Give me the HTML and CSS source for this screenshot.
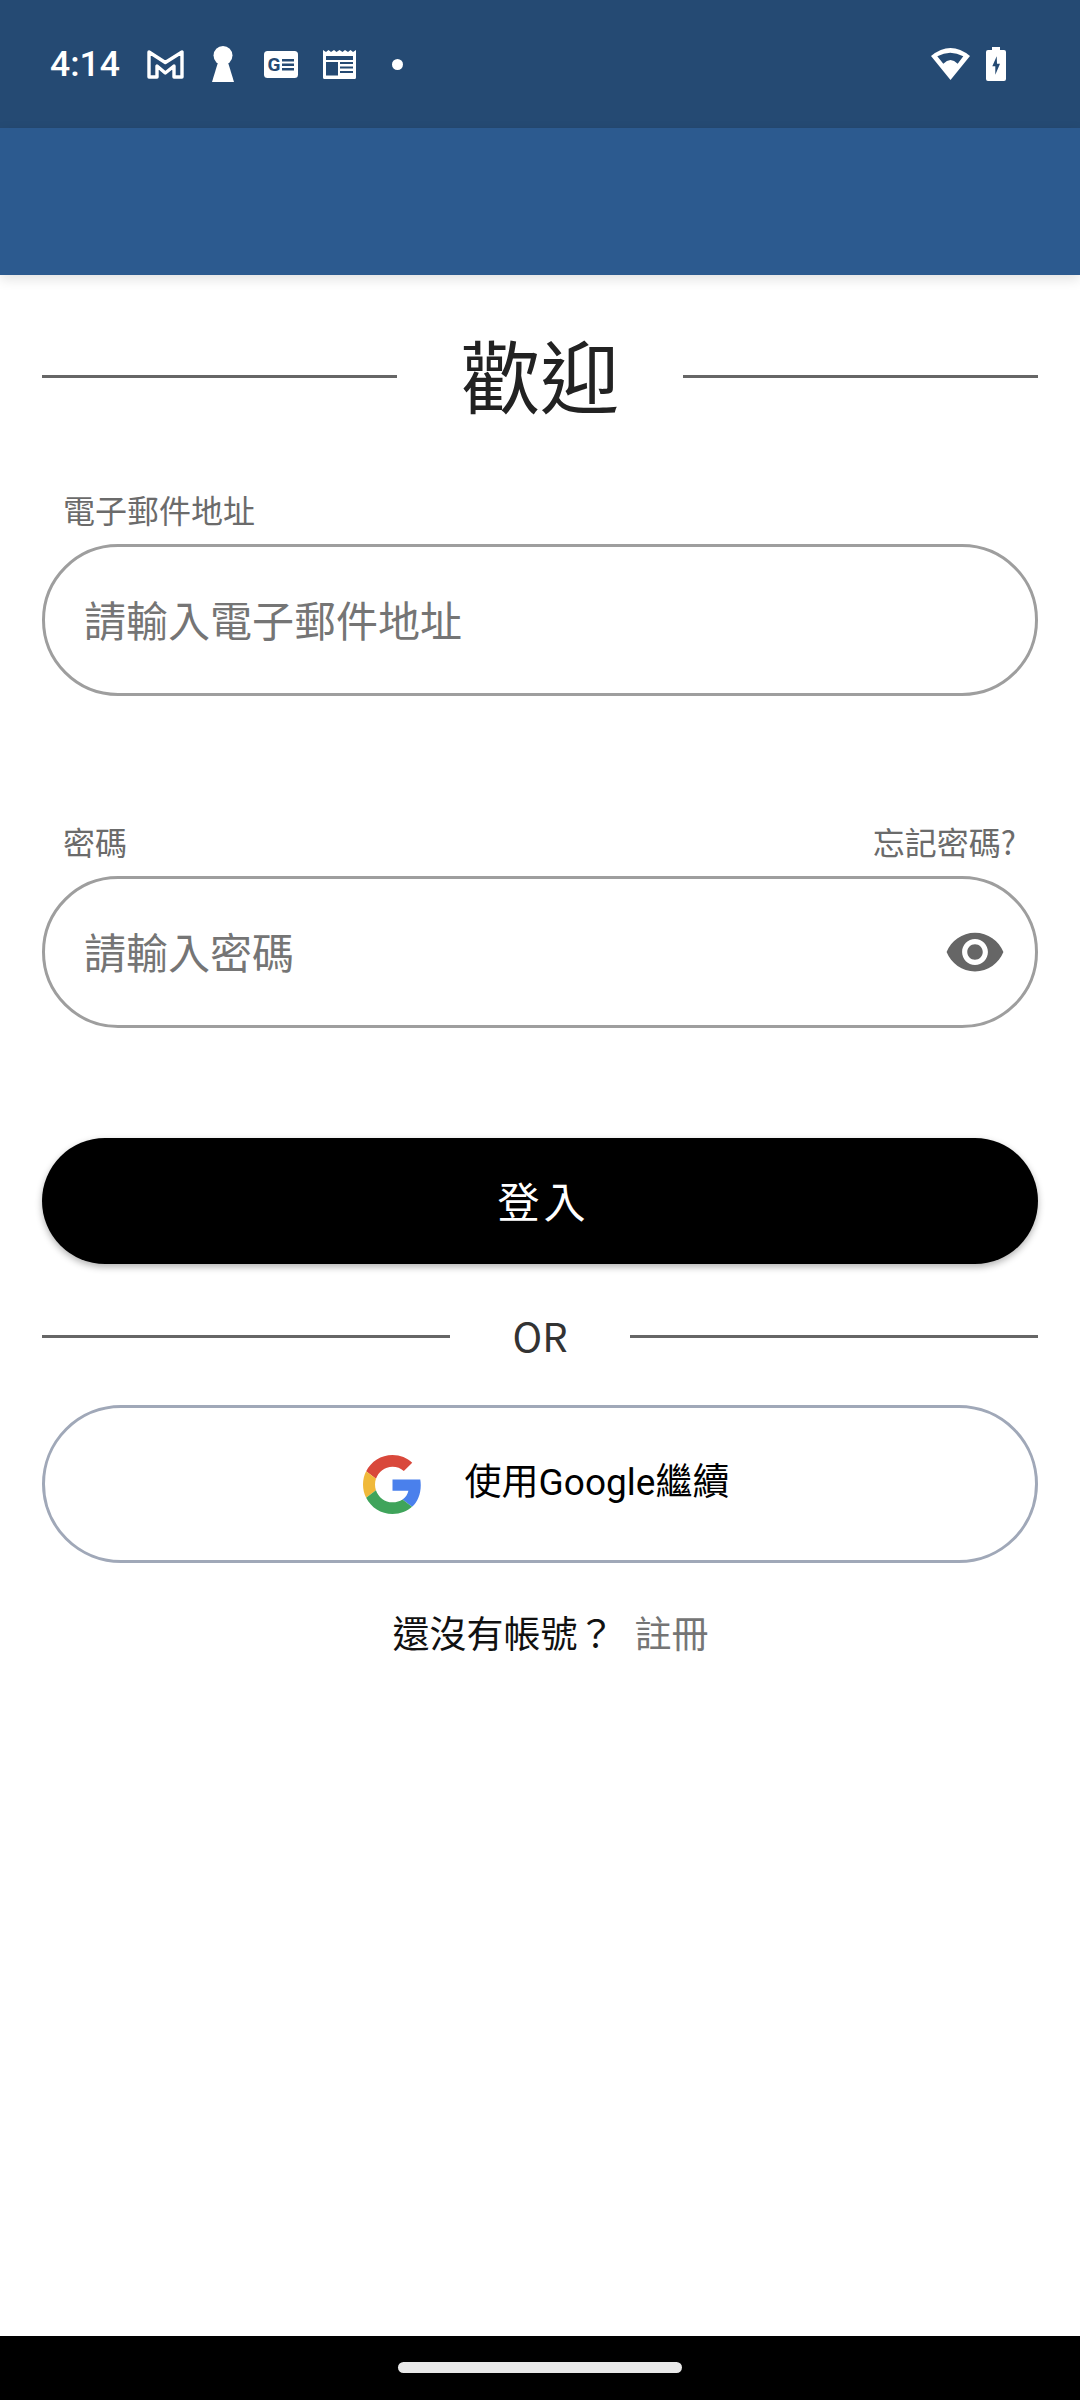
FILE: index.html
```html
<!DOCTYPE html>
<html lang="zh-Hant">
<head>
    <meta charset="UTF-8">
    <meta name="viewport" content="width=device-width, initial-scale=1.0">
    <title>歡迎</title>
    <link rel="stylesheet" href="styles.css">
</head>
<body>
    <div class="status-bar">
        <span class="clock">4:14</span>
        <div class="status-cell">
            <svg width="37" height="29" viewBox="0 0 37 29"><path d="M2 2L18.300 12.500L35 2V27H27V16L18.300 23L10 16V27H2Z" fill="none" stroke="#fff" stroke-width="3.400" stroke-linejoin="round"/></svg>
        </div>
        <div class="status-cell">
            <svg width="22" height="36" viewBox="0 0 22 36"><circle cx="11" cy="9.500" r="9.500" fill="#fff"/><path d="M7 13H15L22 36H0Z" fill="#fff"/></svg>
        </div>
        <div class="status-cell">
            <svg width="34" height="27" viewBox="0 0 34 27"><rect width="34" height="27" rx="3.500" fill="#fff"/><text x="3.500" y="20" class="news-g">G</text><path d="M18 8H30V10.400H18ZM18 12.500H30V14.900H18ZM18 17H30V19.400H18Z" fill="#254a73"/></svg>
        </div>
        <div class="status-cell">
            <svg width="33" height="30" viewBox="0 0 33 30"><path d="M0 1L3 3L5.500 1L8 3L11 1L13.500 3L16.500 1L19.500 3L22 1L25 3L27.500 1L30 3L33 1V28.500Q33 30 31.500 30H1.500Q0 30 0 28.500Z" fill="#fff"/><path d="M3 7H30V11H3ZM3 13H15V26.500H3ZM17 13H30V15H17ZM17 17.500H30V19.500H17ZM17 22H30V24H17Z" fill="#254a73"/></svg>
        </div>
        <div class="status-cell">
            <div class="dot"></div>
        </div>
        <div class="status-right">
            <svg width="39" height="32" viewBox="0 0 39 32"><path d="M0 8Q19.500 -8 39 8L19.500 32Z" fill="#fff"/><path d="M6.300 8.300Q19.300 1.100 32.300 8.300L26.700 15.700Q19.500 8.300 12.300 15.700Z" fill="#254a73"/></svg>
            <svg width="20" height="34" viewBox="0 0 20 34"><path d="M6 0H14V3H18Q20 3 20 5V32Q20 34 18 34H2Q0 34 0 32V5Q0 3 2 3H6Z" fill="#fff"/><path d="M10.700 9.300L6.300 19.300H9.300V27.700L14 16.700H11Z" fill="#254a73"/></svg>
        </div>
    </div>
    <div class="app-bar"></div>

    <div class="content">
        <div class="title-row">
            <div class="rule"></div>
            <h1 class="title">歡迎</h1>
            <div class="rule"></div>
        </div>

        <div class="field-label first"><span>電子郵件地址</span></div>
        <div class="input-box">
            <input type="text" placeholder="請輸入電子郵件地址">
        </div>

        <div class="field-label second"><span>密碼</span><span>忘記密碼?</span></div>
        <div class="input-box">
            <input type="password" placeholder="請輸入密碼">
            <svg class="eye" width="62" height="62" viewBox="0 0 24 24"><path d="M12 4.500C7 4.500 2.730 7.610 1 12c1.730 4.390 6 7.500 11 7.500s9.270-3.110 11-7.500c-1.730-4.390-6-7.500-11-7.500zM12 17c-2.760 0-5-2.240-5-5s2.240-5 5-5 5 2.240 5 5-2.240 5-5 5zm0-8c-1.660 0-3 1.340-3 3s1.340 3 3 3 3-1.340 3-3-1.340-3-3-3z" fill="#666"/></svg>
        </div>

        <button class="login-btn">登入</button>

        <div class="or-row">
            <div class="rule"></div>
            <span class="or-text">OR</span>
            <div class="rule"></div>
        </div>

        <button class="google-btn">
            <svg width="59" height="59" viewBox="0 0 48 48">
                <path fill="#d9483b" d="M24 9.500c3.540 0 6.710 1.220 9.210 3.600l6.850-6.850C35.900 2.380 30.470 0 24 0 14.620 0 6.510 5.380 2.560 13.220l7.980 6.190C12.430 13.720 17.740 9.500 24 9.500z"/>
                <path fill="#4a80ec" d="M46.980 24.550c0-1.570-.15-3.090-.38-4.550H24v9.020h12.940c-.58 2.960-2.260 5.480-4.780 7.180l7.730 6c4.510-4.180 7.090-10.360 7.090-17.65z"/>
                <path fill="#f0b93a" d="M10.530 28.590c-.48-1.450-.76-2.990-.76-4.590s.27-3.140.76-4.590l-7.980-6.190C.92 16.460 0 20.120 0 24c0 3.880.92 7.540 2.560 10.780l7.970-6.190z"/>
                <path fill="#3fa45b" d="M24 48c6.480 0 11.930-2.130 15.890-5.810l-7.730-6c-2.150 1.450-4.920 2.300-8.160 2.300-6.260 0-11.570-4.220-13.470-9.910l-7.980 6.190C6.510 42.620 14.620 48 24 48z"/>
            </svg>
            <span class="google-label">使用Google繼續</span>
        </button>

        <div class="signup-row">
            <span>還沒有帳號？</span>
            <span class="signup-link">註冊</span>
        </div>
    </div>

    <div class="nav-bar"><div class="nav-handle"></div></div>
</body>
</html>
```

FILE: styles.css
```css
* { box-sizing: border-box; }
body { margin: 0; height: 2400px; display: flex; flex-direction: column; background-color: #fff; font-family: "Noto Sans CJK TC", sans-serif; }
.status-bar { height: 128px; flex-shrink: 0; display: flex; align-items: center; padding: 0 74px 0 50px; background-color: #254a73; color: #fff; }
.clock { font-family: Roboto, sans-serif; font-size: 35.5px; font-weight: 500; width: 86px; }
.status-cell { width: 58px; height: 40px; display: flex; align-items: center; justify-content: center; }
.dot { width: 11px; height: 11px; border-radius: 50%; background-color: #fff; }
.news-g { font-family: Roboto, sans-serif; font-size: 19px; font-weight: 700; fill: #254a73; }
.status-right { margin-left: auto; display: flex; align-items: center; gap: 16px; }
.app-bar { height: 147px; flex-shrink: 0; background-color: #2c5a8f; box-shadow: 0 4px 12px rgba(0, 0, 0, 0.12); }
.content { flex: 1; padding: 0 42px; }
.title-row { height: 100px; margin-top: 51px; display: flex; align-items: center; }
.rule { flex: 1; height: 3px; background-color: #666; }
.title { margin: 0 64px; padding-bottom: 4px; font-size: 79px; font-weight: 400; line-height: 96px; color: #222; }
.field-label { height: 40px; display: flex; justify-content: space-between; padding: 0 22px 0 21px; font-size: 32px; line-height: 40px; color: #6b6b6b; }
.field-label.first { margin-top: 63px; margin-bottom: 15px; }
.field-label.second { margin-top: 125px; margin-bottom: 15px; }
.input-box { height: 152px; display: flex; align-items: center; padding: 0 29px 0 39px; border: 3px solid #9e9e9e; border-radius: 76px; background-color: #fff; }
.input-box input { flex: 1; min-width: 0; border: none; outline: none; padding: 0 0 3px; background: transparent; font-family: "Noto Sans CJK TC", sans-serif; font-size: 42px; color: #666; }
.input-box input::placeholder { color: #757575; opacity: 1; }
.login-btn { display: block; width: 100%; height: 126px; margin-top: 110px; padding: 0 0 3px 7px; border: none; border-radius: 63px; background-color: #000; color: #fff; font-family: "Noto Sans CJK TC", sans-serif; font-size: 42px; letter-spacing: 4px; box-shadow: 0 3px 7px rgba(0, 0, 0, 0.3); }
.or-row { height: 40px; margin-top: 52px; display: flex; align-items: center; }
.or-text { width: 180px; padding-bottom: 3px; text-align: center; font-size: 40px; line-height: 40px; color: #333; }
.google-btn { width: 100%; height: 158px; margin-top: 49px; display: flex; align-items: center; justify-content: center; gap: 43px; border: 3px solid #a0a8b8; border-radius: 79px; background-color: #fff; color: #000; font-family: Roboto, "Noto Sans CJK TC", sans-serif; font-size: 37px; padding: 0 0 0 12px; }
.google-label { padding-bottom: 10px; }
.signup-row { height: 50px; margin-top: 44px; padding-left: 21px; display: flex; justify-content: center; gap: 20px; font-size: 37px; line-height: 50px; color: #111; }
.signup-link { color: #757575; }
.nav-bar { height: 64px; flex-shrink: 0; display: flex; justify-content: center; padding-top: 26px; background-color: #000; }
.nav-handle { width: 284px; height: 11px; border-radius: 6px; background-color: #e8e8e8; }
```
